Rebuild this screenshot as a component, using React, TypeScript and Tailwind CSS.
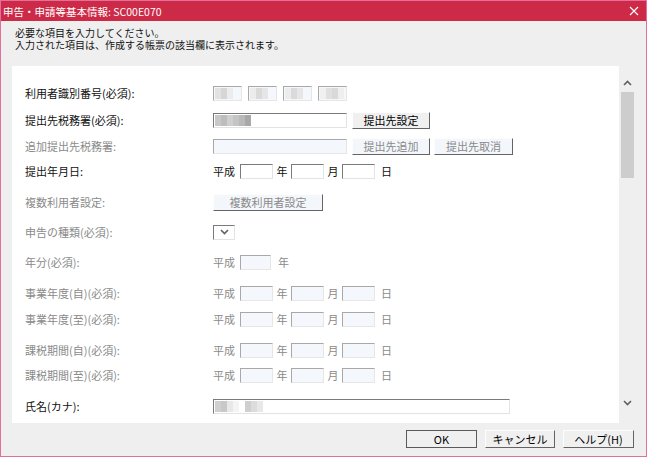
import React from 'react';

const inset = 'border border-t-[#7a7a7a] border-l-[#7a7a7a] border-r-[#e3e3e3] border-b-[#e3e3e3] bg-white';
const insetOff = 'border border-t-[#a8a8a8] border-l-[#a8a8a8] border-r-[#e6e6e6] border-b-[#e6e6e6] bg-[#f4f7fc]';
const btn = 'border border-t-[#fdfdfd] border-l-[#fdfdfd] border-r-[#646464] border-b-[#646464] flex items-center justify-center text-[11px]';

const Mosaic: React.FC<{ cells: string[] }> = ({ cells }) => (
  <div className="flex h-full">
    {cells.map((c, i) => (
      <div key={i} className="w-[6px] h-full" style={{ background: c }} />
    ))}
  </div>
);

const Row: React.FC<{ label: string; off?: boolean; mt: string; children?: React.ReactNode }> = ({ label, off, mt, children }) => (
  <div className={`flex items-center h-[20px] ${mt}`}>
    <div className={`w-[188px] ${off ? 'text-[#8a8a8a]' : 'text-[#111]'}`}>{label}</div>
    <div className={`flex items-center ${off ? 'text-[#8a8a8a]' : 'text-[#111]'}`}>{children}</div>
  </div>
);

const DateBox: React.FC<{ off?: boolean }> = ({ off }) => (
  <div className={`w-[33px] h-[15px] ${off ? insetOff : inset}`} />
);

const DateFields: React.FC<{ off?: boolean }> = ({ off }) => (
  <>
    <span className="w-[27px]">平成</span>
    <DateBox off={off} />
    <span className="w-[18px] text-center">年</span>
    <DateBox off={off} />
    <span className="w-[18px] text-center">月</span>
    <DateBox off={off} />
    <span className="ml-[6px]">日</span>
  </>
);

const Chevron: React.FC<{ up?: boolean }> = ({ up }) => (
  <svg width="9" height="6" viewBox="0 0 9 6">
    <polyline
      points={up ? '1,5 4.5,1.5 8,5' : '1,1 4.5,4.5 8,1'}
      fill="none"
      stroke="#606060"
      strokeWidth="1.6"
    />
  </svg>
);

export default function App() {
  return (
    <div className="w-[647px] h-[457px] border border-[#e3709c] bg-[#efefef] flex flex-col font-['Noto_Sans_CJK_JP',sans-serif] text-[11px] leading-[11px] overflow-hidden">
      {/* title bar */}
      <div className="h-[20px] shrink-0 bg-[#cd2a48] flex items-center justify-between pl-[2px] pr-[7px] text-white text-[10.5px]">
        <span>申告・申請等基本情報: SC00E070</span>
        <svg width="10" height="10" viewBox="0 0 10 10">
          <path d="M1 1 L9 9 M9 1 L1 9" stroke="#fff" strokeWidth="1.1" />
        </svg>
      </div>

      {/* message */}
      <div className="pt-[6px] pl-[14px] text-[#111] text-[10px] leading-[12px]">
        <div>必要な項目を入力してください。</div>
        <div>入力された項目は、作成する帳票の該当欄に表示されます。</div>
      </div>

      {/* form area */}
      <div className="flex mt-[15px] ml-[11px]">
        <div className="w-[607px] h-[357px] bg-white pl-[13px] pt-[17px]">
          <Row label="利用者識別番号(必須):" mt="">
            {[0, 1, 2, 3].map((i) => (
              <div key={i} className={`w-[29px] h-[15px] mr-[6px] p-[1px] ${insetOff} bg-[#f0f0f0]`}>
                <Mosaic cells={i === 0 ? ['#e2e2e2', '#d6d6d6', '#ececec'] : i === 3 ? ['#f0f0f0', '#e0e0e0', '#d9d9d9', '#eeeeee'] : ['#ececec', '#dadada', '#e6e6e6']} />
              </div>
            ))}
          </Row>
          <Row label="提出先税務署(必須):" mt="mt-[7px]">
            <div className={`w-[134px] h-[15px] p-[1px] ${inset}`}>
              <Mosaic cells={['#c8c8c8', '#bdbdbd', '#cfcfcf', '#c4c4c4', '#b9b9b9', '#a8a8a8']} />
            </div>
            <div className={`${btn} ml-[5px] w-[78px] h-[17px] bg-[#f0f0f0] text-black`}>提出先設定</div>
          </Row>
          <Row label="追加提出先税務署:" off mt="mt-[6px]">
            <div className={`w-[134px] h-[15px] ${insetOff}`} />
            <div className={`${btn} ml-[5px] w-[78px] h-[17px] bg-[#f3f6fb] text-[#8a8a8a]`}>提出先追加</div>
            <div className={`${btn} ml-[4px] w-[79px] h-[17px] bg-[#f3f6fb] text-[#8a8a8a]`}>提出先取消</div>
          </Row>
          <Row label="提出年月日:" mt="mt-[5px]">
            <DateFields />
          </Row>
          <Row label="複数利用者設定:" off mt="mt-[11px]">
            <div className={`${btn} w-[110px] h-[17px] bg-[#f3f6fb] text-[#8a8a8a]`}>複数利用者設定</div>
          </Row>
          <Row label="申告の種類(必須):" off mt="mt-[10px]">
            <div className={`w-[22px] h-[15px] ${inset} flex items-center justify-center`}>
              <Chevron />
            </div>
          </Row>
          <Row label="年分(必須):" off mt="mt-[10px]">
            <span className="w-[27px]">平成</span>
            <div className={`w-[31px] h-[15px] ${insetOff}`} />
            <span className="ml-[7px]">年</span>
          </Row>
          <Row label="事業年度(自)(必須):" off mt="mt-[11px]">
            <DateFields off />
          </Row>
          <Row label="事業年度(至)(必須):" off mt="mt-[6px]">
            <DateFields off />
          </Row>
          <Row label="課税期間(自)(必須):" off mt="mt-[11px]">
            <DateFields off />
          </Row>
          <Row label="課税期間(至)(必須):" off mt="mt-[5px]">
            <DateFields off />
          </Row>
          <Row label="氏名(カナ):" mt="mt-[11px]">
            <div className={`w-[297px] h-[15px] p-[1px] ${inset}`}>
              <Mosaic cells={['#d0d0d0', '#c8c8c8', '#e8e8e8', '#f4f4f4', '#ffffff', '#cfcfcf', '#dcdcdc', '#e8e8e8']} />
            </div>
          </Row>
        </div>

        {/* scrollbar */}
        <div className="w-[17px] h-[357px] flex flex-col items-center">
          <div className="h-[26px] flex items-end pb-[6px]">
            <Chevron up />
          </div>
          <div className="w-[13px] h-[86px] bg-[#cdcdcd]" />
          <div className="flex-1" />
          <div className="h-[24px] flex items-start pt-[1px]">
            <Chevron />
          </div>
        </div>
      </div>

      {/* footer buttons */}
      <div className="flex justify-end gap-[8px] mt-[7px] pr-[12px] text-black">
        <div className="w-[71px] h-[18px] border border-[#5a5a5a] bg-[#f0f0f0] flex items-center justify-center">OK</div>
        <div className={`${btn} w-[70px] h-[18px] bg-[#f0f0f0]`}>キャンセル</div>
        <div className={`${btn} w-[71px] h-[18px] bg-[#f0f0f0]`}>ヘルプ(H)</div>
      </div>
    </div>
  );
}
